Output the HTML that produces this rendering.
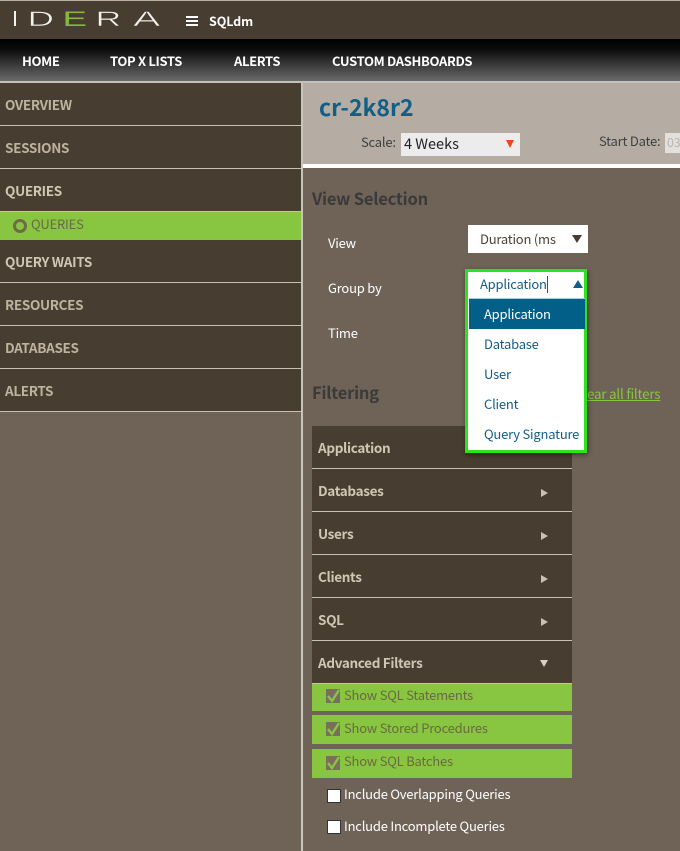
<!DOCTYPE html>
<html><head><meta charset="utf-8"><style>
html,body{margin:0;padding:0;width:680px;height:851px;overflow:hidden;background:#6f6358}
body{position:relative;font-family:"Noto Sans CJK JP","Liberation Sans",sans-serif;font-size:13px;letter-spacing:-.22px}
.a{position:absolute;white-space:nowrap}
.t{position:absolute;white-space:nowrap;line-height:20px}
.side{color:#cfc6b4;font-weight:700;font-size:13.5px;left:5px;letter-spacing:-.33px}
.nav{color:#fff;font-weight:700;font-size:13px;top:51px;letter-spacing:-.35px}
.fh{position:absolute;left:312px;width:260px;height:42px;background:#483d31;border-bottom:1px solid #c9c2b4}
.fh span{position:absolute;left:6px;top:11px;line-height:20px;color:#cfc6b4;font-weight:700;font-size:13.5px;letter-spacing:-.33px}
.fh i{position:absolute;left:229px;top:20px;width:0;height:0;border-left:7px solid #c9c2b4;border-top:4px solid transparent;border-bottom:4px solid transparent}
.gr{position:absolute;left:312px;width:260px;background:#88c540}
.gr span{position:absolute;left:32px;line-height:20px;color:#6a6a42;font-size:13px}
.cb{position:absolute;left:14px;width:14px;height:14px;background:#7a6e5f}
.w{position:absolute;left:327px;width:12px;height:12px;background:#fff;border:1px solid #333}
.dd{position:absolute;left:484px;line-height:20px;color:#125e86;font-size:13px}
</style></head><body>
<div class="a" style="left:0;top:0;width:680px;height:39px;background:#483d31;border-top:1px solid #b8b0a6;box-sizing:border-box"></div>
<svg class="a" style="left:0;top:0;letter-spacing:0" width="180" height="39" font-family="Liberation Sans" font-size="21" fill="#f4f2ee" stroke="#483d31" stroke-width=".45">
<rect x="14" y="11" width="2" height="15" fill="#f4f2ee" stroke="none"/>
<text transform="translate(27.5 26) scale(1.75 1)">D</text>
<text transform="translate(62.5 26) scale(1.75 1)" fill="#86b83c" stroke="none">E</text>
<text transform="translate(95.5 26) scale(1.7 1)">R</text>
<text transform="translate(133 26) scale(1.95 1)">A</text>
</svg>
<div class="a" style="left:186px;top:16px;width:12px;height:2px;background:#fff"></div>
<div class="a" style="left:186px;top:20px;width:12px;height:2px;background:#fff"></div>
<div class="a" style="left:186px;top:24px;width:12px;height:2px;background:#fff"></div>
<div class="t" style="left:209px;top:11px;color:#fff;font-weight:700;font-size:12.5px;letter-spacing:-.1px">SQLdm</div>
<div class="a" style="left:0;top:39px;width:680px;height:42px;background:linear-gradient(#000,#0c0c0c 25%,#6b6b6b)"></div>
<div class="a" style="left:0;top:81px;width:680px;height:2px;background:#c4c0ba"></div>
<div class="t nav" style="left:22px">HOME</div>
<div class="t nav" style="left:110px">TOP X LISTS</div>
<div class="t nav" style="left:234px">ALERTS</div>
<div class="t nav" style="left:332px">CUSTOM DASHBOARDS</div>

<div class="a" style="left:0;top:83px;width:301px;height:329px;background:#483d31"></div>
<div class="a" style="left:301px;top:83px;width:2px;height:768px;background:#c9c4bc"></div>
<div class="a" style="left:0;top:125px;width:301px;height:1px;background:#c9c2b4"></div>
<div class="a" style="left:0;top:168px;width:301px;height:1px;background:#c9c2b4"></div>
<div class="a" style="left:0;top:211px;width:301px;height:1px;background:#c9c2b4"></div>
<div class="a" style="left:0;top:212px;width:301px;height:28px;background:#88c540"></div>
<div class="a" style="left:0;top:282px;width:301px;height:1px;background:#c9c2b4"></div>
<div class="a" style="left:0;top:325px;width:301px;height:1px;background:#c9c2b4"></div>
<div class="a" style="left:0;top:368px;width:301px;height:1px;background:#c9c2b4"></div>
<div class="a" style="left:0;top:411px;width:301px;height:1px;background:#c9c2b4"></div>
<div class="t side" style="top:94px;color:#bdb39e">OVERVIEW</div>
<div class="t side" style="top:137px;color:#bdb39e">SESSIONS</div>
<div class="t side" style="top:180px">QUERIES</div>
<div class="a" style="left:13px;top:219px;width:8px;height:8px;border:3px solid #6f6a4a;border-radius:50%"></div>
<div class="t" style="left:31px;top:214px;color:#6a6a42;font-size:13px">QUERIES</div>
<div class="t side" style="top:251px">QUERY WAITS</div>
<div class="t side" style="top:294px;color:#bdb39e">RESOURCES</div>
<div class="t side" style="top:337px;color:#bdb39e">DATABASES</div>
<div class="t side" style="top:380px;color:#bdb39e">ALERTS</div>

<div class="a" style="left:303px;top:83px;width:377px;height:81px;background:#b5ada4"></div>
<div class="a" style="left:303px;top:164px;width:377px;height:4px;background:#fff"></div>
<div class="t" style="left:319px;top:92px;line-height:28px;color:#125e86;font-weight:700;font-size:23px;letter-spacing:0">cr-2k8r2</div>
<div class="t" style="left:361px;top:132px;color:#3f3f3f;font-size:13px">Scale:</div>
<div class="a" style="left:401px;top:133px;width:119px;height:23px;background:#ececec"></div>
<div class="t" style="left:404px;top:134px;color:#222;font-size:14.5px;letter-spacing:0">4 Weeks</div>
<div class="a" style="left:506px;top:140px;width:0;height:0;border-left:4px solid transparent;border-right:4px solid transparent;border-top:8px solid #e8481c"></div>
<div class="t" style="left:599px;top:131px;color:#3f3f3f;font-size:13px">Start Date:</div>
<div class="a" style="left:665px;top:133px;width:15px;height:20px;background:#e3e0dc"></div>
<div class="t" style="left:667px;top:132px;color:#b8b4ae;font-size:12.5px">03</div>

<div class="t" style="left:312px;top:188px;color:#3a3a3a;font-weight:700;font-size:16.5px;letter-spacing:-.2px">View Selection</div>
<div class="t" style="left:328px;top:233px;color:#fff;font-size:13px">View</div>
<div class="a" style="left:468px;top:225px;width:120px;height:28px;background:#fff"></div>
<div class="t" style="left:480px;top:229px;color:#4a4238;font-size:13px">Duration (ms</div>
<div class="a" style="left:572px;top:235px;width:0;height:0;border-left:5px solid transparent;border-right:5px solid transparent;border-top:8px solid #483d31"></div>
<div class="t" style="left:328px;top:278px;color:#fff;font-size:13px">Group by</div>
<div class="t" style="left:328px;top:323px;color:#fff;font-size:13px">Time</div>

<div class="t" style="left:312px;top:382px;color:#3a3a3a;font-weight:700;font-size:16.5px;letter-spacing:-.2px">Filtering</div>
<div class="t" style="left:587px;top:383px;color:#88c540;font-size:13.4px;text-decoration:underline">ear all filters</div>

<div class="fh" style="top:426px"><span>Application</span></div>
<div class="fh" style="top:469px"><span>Databases</span><i></i></div>
<div class="fh" style="top:512px"><span>Users</span><i></i></div>
<div class="fh" style="top:555px"><span>Clients</span><i></i></div>
<div class="fh" style="top:598px"><span>SQL</span><i></i></div>
<div class="fh" style="top:641px"><span>Advanced Filters</span></div>
<div class="a" style="left:540px;top:660px;width:0;height:0;border-left:4px solid transparent;border-right:4px solid transparent;border-top:7px solid #d8d2c6"></div>

<div class="gr" style="top:684px;height:27px"><div class="cb" style="top:5px"></div><svg class="a" style="left:14px;top:3px" width="16" height="18"><path d="M2 9l4 5 7-11" fill="none" stroke="#88c540" stroke-width="2.4"/></svg><span style="top:1px">Show SQL Statements</span></div>
<div class="gr" style="top:715px;height:29px"><div class="cb" style="top:7px"></div><svg class="a" style="left:14px;top:5px" width="16" height="18"><path d="M2 9l4 5 7-11" fill="none" stroke="#88c540" stroke-width="2.4"/></svg><span style="top:3px">Show Stored Procedures</span></div>
<div class="gr" style="top:749px;height:29px"><div class="cb" style="top:7px"></div><svg class="a" style="left:14px;top:5px" width="16" height="18"><path d="M2 9l4 5 7-11" fill="none" stroke="#88c540" stroke-width="2.4"/></svg><span style="top:2px">Show SQL Batches</span></div>
<div class="w" style="top:789px"></div>
<div class="t" style="left:344px;top:784px;color:#fff;font-size:13px">Include Overlapping Queries</div>
<div class="w" style="top:820px"></div>
<div class="t" style="left:344px;top:816px;color:#fff;font-size:13px">Include Incomplete Queries</div>

<div class="a" style="left:465px;top:269px;width:116px;height:178px;border:3px solid #2fe31c;box-shadow:1px 2px 5px rgba(0,0,0,.45);background:#fff"></div>
<div class="a" style="left:469px;top:298px;width:116px;height:1px;background:#a9cbdc"></div>
<div class="t" style="left:480px;top:274px;color:#125e86;font-size:13px">Application</div>
<div class="a" style="left:547px;top:276px;width:1px;height:17px;background:#125e86"></div>
<div class="a" style="left:573px;top:280px;width:0;height:0;border-left:5px solid transparent;border-right:5px solid transparent;border-bottom:8px solid #125e86"></div>
<div class="a" style="left:469px;top:299px;width:116px;height:30px;background:#015f88"></div>
<div class="dd" style="top:304px;color:#fff">Application</div>
<div class="dd" style="top:334px">Database</div>
<div class="dd" style="top:364px">User</div>
<div class="dd" style="top:394px">Client</div>
<div class="dd" style="top:424px">Query Signature</div>
</body></html>
